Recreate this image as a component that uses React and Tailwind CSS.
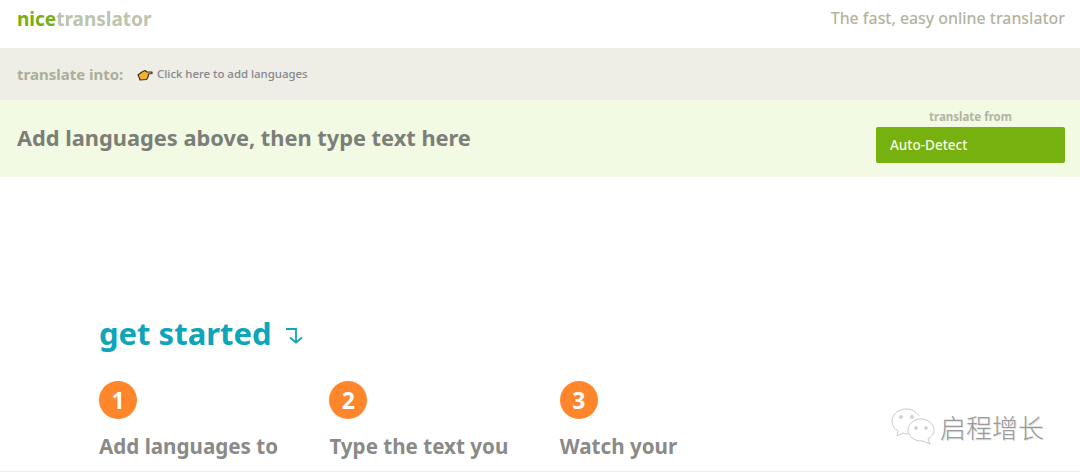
import React from 'react';

const steps = [
  { n: 1, label: 'Add languages to' },
  { n: 2, label: 'Type the text you' },
  { n: 3, label: 'Watch your' },
];

function PointingHand() {
  return (
    <svg width="16" height="12" viewBox="0 0 16 12" className="mt-[2px] shrink-0">
      <path
        d="M1 6 L5 3 L8 1.5 L10 3 L15 3 L15 4.5 L11.5 5 L11 8 L9.5 10.5 L3 11 L2.5 9 Z"
        fill="#f5b32c"
        stroke="#3c3320"
        strokeWidth="1.2"
        strokeLinejoin="round"
      />
    </svg>
  );
}

function DownArrow() {
  return (
    <svg width="19" height="17" viewBox="0 0 19 17" fill="none" stroke="#0ea5bb" strokeWidth="1.8" className="mt-[4px] shrink-0">
      <path d="M1 2 H11 V15" />
      <path d="M5 10.5 L11 15.5 L17 10.5" />
    </svg>
  );
}

function WeChatMark() {
  return (
    <svg width="44" height="38" viewBox="0 0 44 38" fill="none" stroke="#c9c9c9" strokeWidth="1" className="shrink-0">
      <path d="M28 8 C25 3 20 1 15 1 C7 1 1 7 1 13 C1 18 4 21 7 23 L6 28 L12 25 C14 26 16 26 18 26" fill="#fff" />
      <circle cx="10" cy="9" r="1.4" fill="#ddd" />
      <circle cx="21" cy="9" r="1.4" fill="#ddd" />
      <path d="M30 11 C23 11 17 16 17 22 C17 28 23 33 30 33 L32 33 L39 36 L37 31 C40 29 43 26 43 22 C43 16 37 11 30 11 Z" fill="#fff" />
      <circle cx="25" cy="20" r="1.3" fill="#ddd" />
      <circle cx="35" cy="20" r="1.3" fill="#ddd" />
    </svg>
  );
}

export default function App() {
  return (
    <div className="relative h-[476px] w-[1080px] overflow-hidden bg-white font-['Noto_Sans',sans-serif]">
      {/* top bar */}
      <div className="flex h-12 items-start justify-between pl-[17px] pr-[15px]">
        <div className="mt-[6px] text-[19px] font-bold leading-[26px]">
          <span className="text-[#77b10f]">nice</span>
          <span className="text-[#bcc4ae]">translator</span>
        </div>
        <div className="mt-[6px] text-[15.9px] font-medium leading-6 text-[#b3b39e]">
          The fast, easy online translator
        </div>
      </div>

      {/* language bar */}
      <div className="flex h-[52px] items-center bg-[#eeede6] pl-[17px]">
        <span className="w-[120px] text-[15px] font-bold text-[#abae99]">translate into:</span>
        <PointingHand />
        <span className="ml-[4px] text-[11.4px] font-medium text-[#84878c]">Click here to add languages</span>
      </div>

      {/* input bar */}
      <div className="flex h-[77px] items-center justify-between bg-[#f3fae3] pl-[17px] pr-[15px]">
        <span className="text-[21.8px] font-bold text-[#7c7e78]">Add languages above, then type text here</span>
        <div className="flex w-[189px] flex-col items-center pb-[5px]">
          <span className="text-[11.5px] font-bold leading-4 text-[#b1b4a2]">translate from</span>
          <div className="mt-[2px] flex h-9 w-full items-center rounded-[2px] bg-[#77b10f] px-[14px] text-[13.5px] font-medium text-[#f3fae3]">
            Auto-Detect
          </div>
        </div>
      </div>

      {/* get started */}
      <div className="pl-[99px] pt-[136px]">
        <div className="flex items-center gap-[13px]">
          <h2 className="text-[31px] font-bold leading-10 text-[#0ea5bb]">get started</h2>
          <DownArrow />
        </div>
        <div className="mt-[28px] flex">
          {steps.map((step) => (
            <div key={step.n} className="w-[230.4px]">
              <div className="flex h-[38px] w-[38px] items-center justify-center rounded-full bg-[#ff862b] text-[23px] font-bold text-white">
                {step.n}
              </div>
              <p className="mt-[13px] whitespace-nowrap text-[20.6px] font-bold leading-7 text-[#8a8a88]">{step.label}</p>
            </div>
          ))}
        </div>
      </div>

      {/* bottom edge and watermark overlay */}
      <div className="absolute bottom-[4px] left-0 h-px w-full bg-[#eeeeee]" />
      <div className="absolute left-[891px] top-[408px] flex items-center gap-[5px]">
        <WeChatMark />
        <span className="font-['Noto_Sans_CJK_SC',sans-serif] text-[26px] font-light leading-8 text-[#9a9a9a] [text-shadow:1px_1px_0_#e4e4e4]">
          启程增长
        </span>
      </div>
    </div>
  );
}
